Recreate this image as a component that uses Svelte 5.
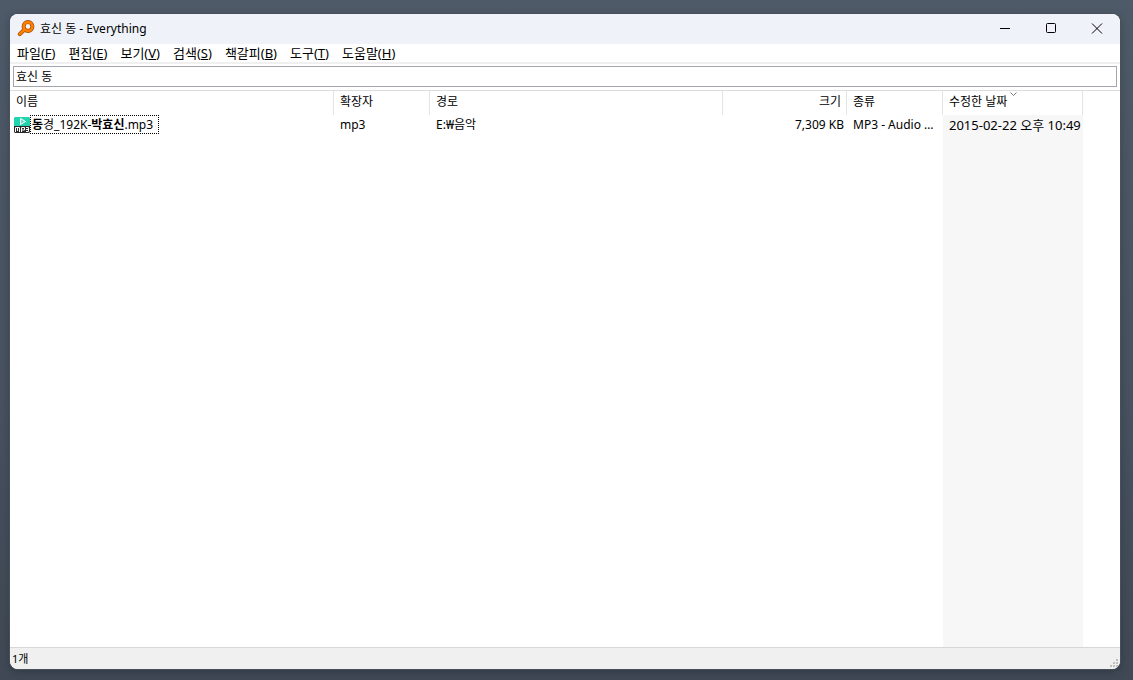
<script lang="ts">
	type Part = { text: string; hit: boolean };

	let query = $state('효신 동');

	const menus = [
		{ label: '파일', key: 'F' },
		{ label: '편집', key: 'E' },
		{ label: '보기', key: 'V' },
		{ label: '검색', key: 'S' },
		{ label: '책갈피', key: 'B' },
		{ label: '도구', key: 'T' },
		{ label: '도움말', key: 'H' }
	];

	const columns = [
		{ id: 'name', label: '이름' },
		{ id: 'ext', label: '확장자' },
		{ id: 'path', label: '경로' },
		{ id: 'size', label: '크기' },
		{ id: 'type', label: '종류' },
		{ id: 'date', label: '수정한 날짜' }
	];

	const sortBy = 'date';

	const files: { name: Part[]; ext: string; path: string; size: string; type: string; date: string }[] = [
		{
			name: [
				{ text: '동', hit: true },
				{ text: '경_192K-', hit: false },
				{ text: '박효신', hit: true },
				{ text: '.mp3', hit: false }
			],
			ext: 'mp3',
			path: 'E:₩음악',
			size: '7,309 KB',
			type: 'MP3 - Audio File',
			date: '2015-02-22 오후 10:49'
		}
	];
</script>

<div class="desktop">
	<div class="window">
		<header class="titlebar">
			<svg class="logo" width="18" height="18" viewBox="0 0 18 18" aria-hidden="true">
				<path d="M7.500 9.500 2.800 14.200" stroke="#a34a0c" stroke-width="4" stroke-linecap="round" />
				<circle cx="11" cy="6.500" r="4.400" stroke="#a34a0c" stroke-width="4" />
				<path d="M7.500 9.500 2.800 14.200" stroke="#ff8000" stroke-width="2.600" stroke-linecap="round" />
				<circle cx="11" cy="6.500" r="4.400" stroke="#ff8000" stroke-width="2.600" />
			</svg>
			<h1>{query} - Everything</h1>
			<div class="window-buttons">
				<button type="button" aria-label="최소화">
					<svg width="12" height="12" viewBox="0 0 12 12"><path d="M1 5.500h10" /></svg>
				</button>
				<button type="button" aria-label="최대화">
					<svg width="12" height="12" viewBox="0 0 12 12"><rect x="1.500" y=".5" width="9" height="9" rx="1" /></svg>
				</button>
				<button type="button" aria-label="닫기">
					<svg width="12" height="12" viewBox="0 0 12 12"><path d="m1 .5 10 10M11 .5l-10 10" /></svg>
				</button>
			</div>
		</header>

		<nav class="menubar">
			{#each menus as menu (menu.key)}
				<button type="button">{menu.label}(<u>{menu.key}</u>)</button>
			{/each}
		</nav>

		<div class="search">
			<input type="text" aria-label="검색" bind:value={query} />
		</div>

		<main class="results">
			<table>
				<colgroup>
					{#each columns as col (col.id)}
						<col class={col.id} />
					{/each}
					<col />
				</colgroup>
				<thead>
					<tr>
						{#each columns as col (col.id)}
							<th class={col.id} scope="col">
								{col.label}
								{#if col.id === sortBy}
									<svg class="sort" width="7" height="4" viewBox="0 0 7 4"><path d="m.5.5 3 3 3-3" /></svg>
								{/if}
							</th>
						{/each}
						<td></td>
					</tr>
				</thead>
				<tbody>
					{#each files as file}
						<tr class="file">
							<td class="name">
								<div class="file-name">
									<svg width="16" height="16" viewBox="0 0 16 16" aria-hidden="true">
										<path d="M1 0h14l1 1v8H0V1z" fill="#22d3b0" />
										<path d="M6.500 1.500v6l5-3z" fill="#5fe3ca" stroke="#fff" />
										<path d="M0 9h16v6l-1 1H1l-1-1z" fill="#2b2b2b" />
										<path d="M1.500 15v-4.500h4V15M3.500 11v3M7.500 15v-4.500h3v2.500h-3M12 10.500h2.500v4H12M12 12.500h2.500" fill="none" stroke="#fff" />
									</svg>
									<span class="focus">{#each file.name as part}{#if part.hit}<b>{part.text}</b>{:else}{part.text}{/if}{/each}</span>
								</div>
							</td>
							<td class="ext">{file.ext}</td>
							<td class="path">{file.path}</td>
							<td class="size">{file.size}</td>
							<td class="type">{file.type}</td>
							<td class="date">{file.date}</td>
							<td></td>
						</tr>
					{/each}
					<tr class="rest">
						<td colspan="5"></td>
						<td class="date"></td>
						<td></td>
					</tr>
				</tbody>
			</table>
		</main>

		<footer class="statusbar">
			<span>{files.length}개</span>
			<svg class="grip" width="8" height="8" viewBox="0 0 8 8" fill="#bfbfbf" aria-hidden="true">
				<path d="M6 0h2v2H6zM3 3h2v2H3zM6 3h2v2H6zM0 6h2v2H0zM3 6h2v2H3zM6 6h2v2H6z" />
			</svg>
		</footer>
	</div>
</div>

<style>
	.desktop {
		box-sizing: border-box;
		height: 100vh;
		padding: 14px 13px 11px 10px;
		background: linear-gradient(#4e5a68, #47515f 60%, #3f4854);
		font-family: 'Noto Sans', 'Noto Sans CJK KR', sans-serif;
		font-size: 12px;
		line-height: 16px;
		color: #000;
	}

	.window {
		display: flex;
		flex-direction: column;
		height: 100%;
		overflow: hidden;
		background: #fff;
		border-radius: 8px;
		box-shadow: 0 0 0 1px #47505c, 0 2px 8px rgba(0, 0, 0, 0.25);
	}

	button {
		padding: 0;
		border: 0;
		background: none;
		font: inherit;
		color: inherit;
	}

	.titlebar {
		display: flex;
		align-items: center;
		height: 30px;
		padding-left: 7px;
		background: #eff3f9;
	}
	.logo {
		margin-right: 5px;
		fill: none;
	}
	h1 {
		flex: 1;
		margin: 0;
		font-size: 12px;
		font-weight: 400;
	}
	.window-buttons {
		display: flex;
	}
	.window-buttons button {
		display: flex;
		align-items: center;
		justify-content: center;
		width: 46px;
		height: 30px;
	}
	.window-buttons svg {
		fill: none;
		stroke: #000;
	}

	.menubar {
		display: flex;
		gap: 13px;
		height: 18px;
		padding-left: 7px;
		border-bottom: 2px solid #f0f0f0;
		font-size: 13px;
	}
	.menubar button {
		line-height: 18px;
	}
	.menubar u {
		text-underline-offset: 1px;
	}

	.search {
		padding: 2px 3px 3px;
		border-bottom: 1px solid #dcdcdc;
	}
	input {
		display: block;
		box-sizing: border-box;
		width: 100%;
		height: 21px;
		padding: 0 2px 2px;
		border: 1px solid #a5a5ad;
		outline: none;
		background: #fff;
		font: inherit;
		color: inherit;
	}

	.results {
		display: flex;
		flex: 1;
		min-height: 0;
	}
	table {
		width: 100%;
		height: 100%;
		border-collapse: separate;
		border-spacing: 0;
		table-layout: fixed;
	}
	col.name {
		width: 324px;
	}
	col.ext,
	col.type {
		width: 96px;
	}
	col.path {
		width: 293px;
	}
	col.size {
		width: 124px;
	}
	col.date {
		width: 140px;
	}

	th,
	td {
		padding: 0 4px 0 6px;
		overflow: hidden;
		text-align: left;
		text-overflow: ellipsis;
		white-space: nowrap;
	}
	th {
		position: relative;
		height: 24px;
		padding-bottom: 2px;
		box-sizing: border-box;
		border-right: 1px solid #e5e5e5;
		font-weight: 400;
	}
	.size {
		text-align: right;
	}
	td.size {
		padding-right: 3px;
	}
	th.size {
		padding-right: 5px;
	}
	.sort {
		position: absolute;
		top: 1px;
		left: 67px;
		fill: none;
		stroke: #777;
	}
	.file td {
		height: 19px;
	}
	.file td.name {
		padding-left: 4px;
	}
	td.date {
		padding-right: 0;
		background: #f7f7f7;
		font-size: 13px;
	}
	.rest td {
		height: 100%;
	}

	.file-name {
		display: flex;
		align-items: center;
	}
	.focus {
		padding: 0 5px 0 1px;
		border: 1px dotted #000;
		line-height: 17px;
	}

	.statusbar {
		display: flex;
		align-items: flex-end;
		justify-content: space-between;
		height: 21px;
		padding: 0 2px;
		border-top: 1px solid #d7d7d7;
		background: #f0f0f0;
		font-size: 11px;
	}
	.statusbar span {
		align-self: center;
	}
	.grip {
		margin-bottom: 2px;
	}
</style>
